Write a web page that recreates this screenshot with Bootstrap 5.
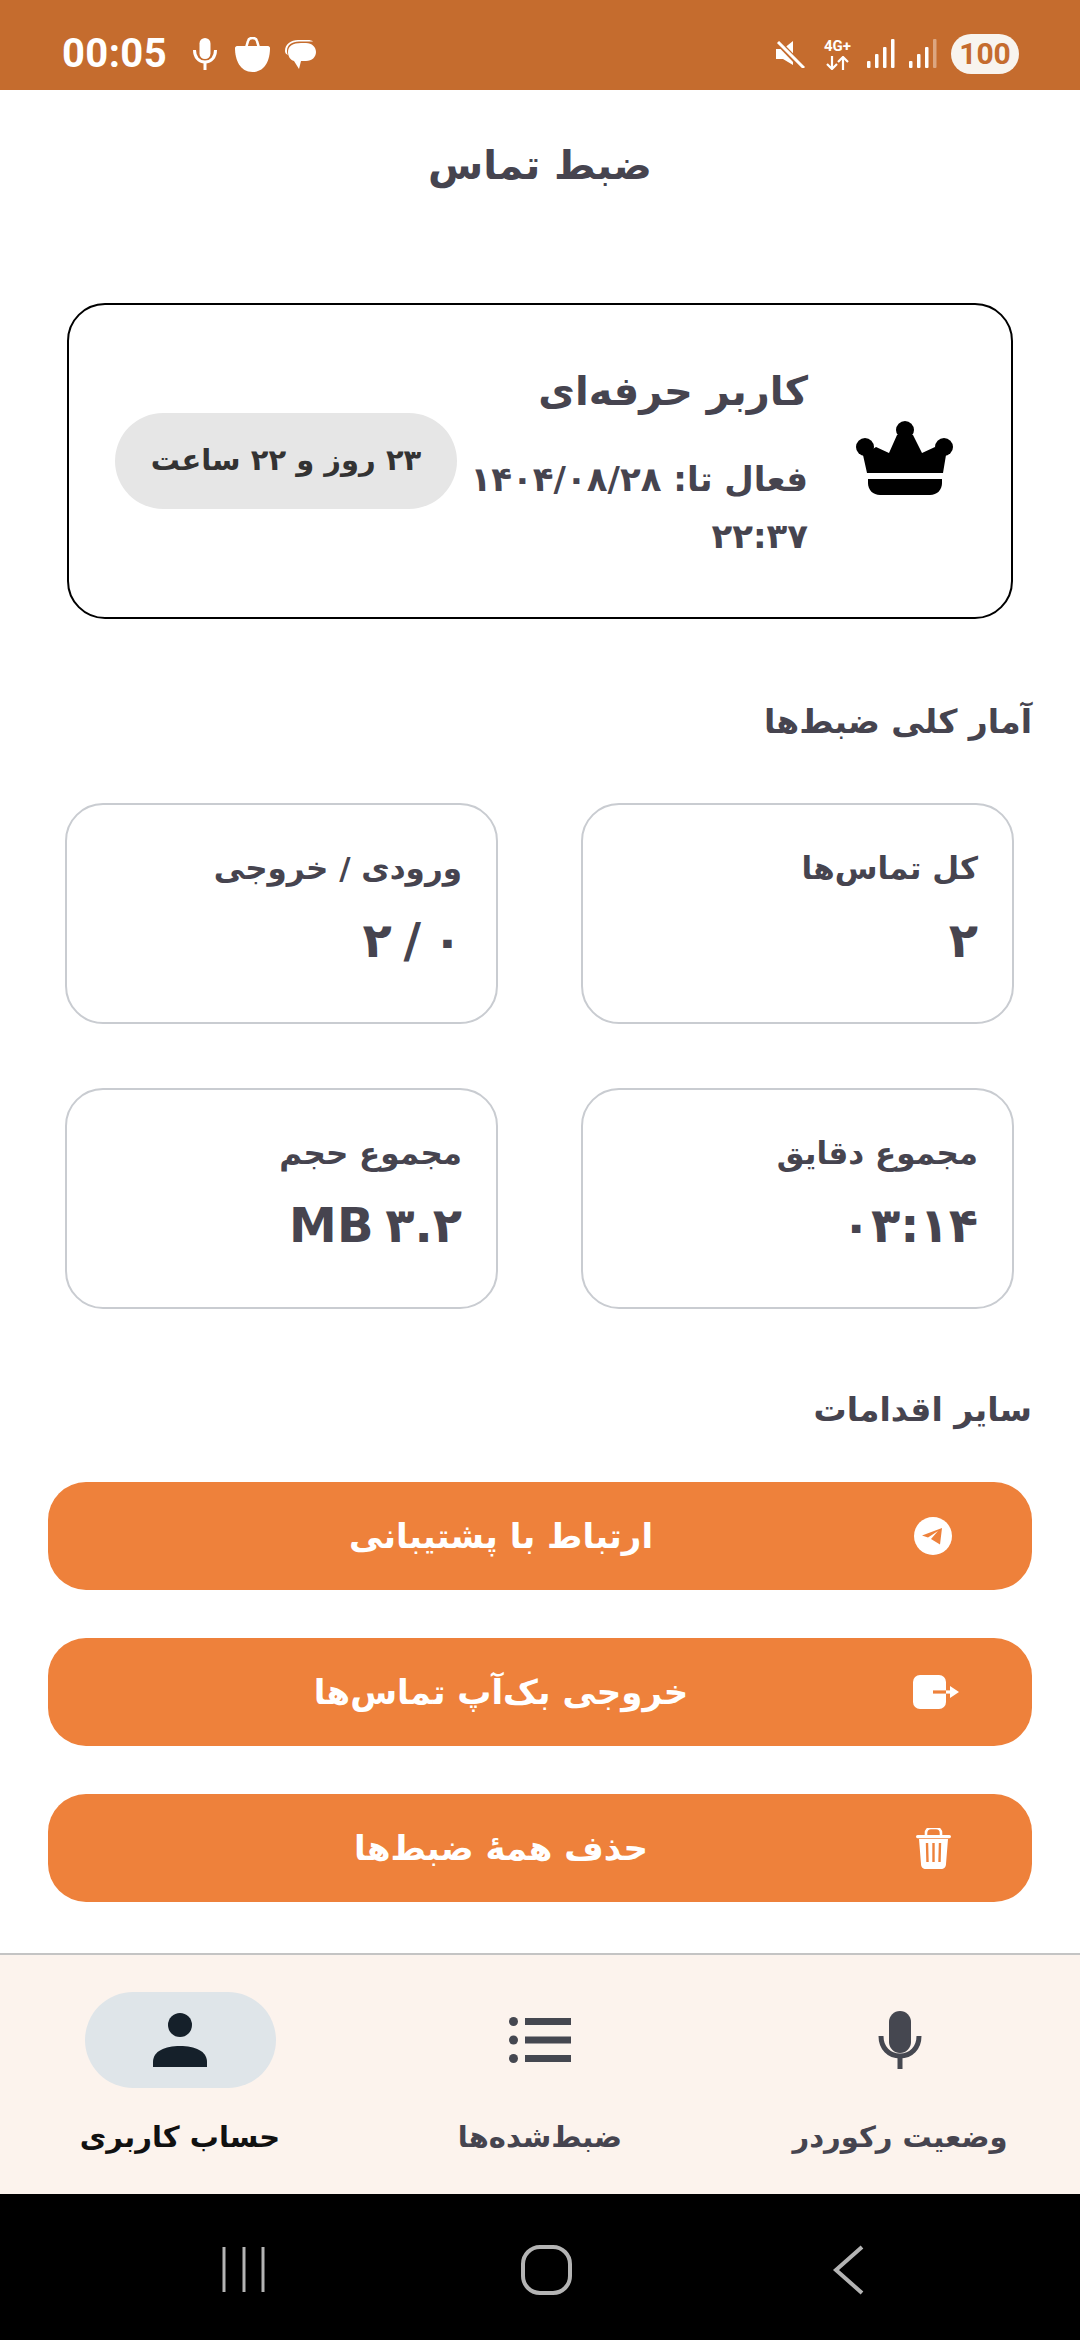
<!DOCTYPE html>
<html lang="fa" dir="rtl">
<head>
<meta charset="utf-8">
<link href="https://cdn.jsdelivr.net/npm/bootstrap@5.3.0/dist/css/bootstrap.min.css" rel="stylesheet">
<style>
html,body{margin:0;background:#fff}
body{font-family:"DejaVu Sans","Noto Sans",sans-serif;color:#46444f;width:1080px;height:2340px;overflow:hidden}
.app-screen{width:1080px;height:2340px}
.status-strip{height:90px;background:#c56c2e;padding:18px 61px 0 62px;color:#fff}
.clock-text{font:700 40px/1 Roboto,sans-serif;letter-spacing:.4px;width:105px;white-space:nowrap}
.left-icons{gap:18px}
.chat-ico{margin-left:-4px}
.net-wrap{width:33px;margin-left:16px;color:#fff}
.net-tag{font:700 15px/14px Roboto,sans-serif;white-space:nowrap;margin-bottom:3px;text-align:center}
.batt-pill{width:68px;height:40px;border-radius:20px;background:#f8f4ee;color:#c56c2e;font:700 30px/40px Roboto,sans-serif;text-align:center;margin-left:14px}
.screen-title{height:213px;padding-top:50px;font-size:40px;font-weight:700;line-height:50px}
.hero-box{margin:0 67px;height:316px;border:2px solid #000;border-radius:38px;padding:0 58px 0 46px}
.crown-ico{margin-top:-6px}
.hero-texts{width:351px;margin-right:48px}
.hero-name{font-size:40px;font-weight:700;line-height:60px;margin-bottom:30px;margin-top:4px}
.hero-date{font-size:34px;font-weight:700;line-height:57px}
.time-pill{background:#e6e6e6;color:#333;border-radius:48px;width:342px;height:96px;font-size:29px;font-weight:700}
.block-head{font-size:33px;font-weight:700;line-height:44px;padding-right:48px}
.head-stats{margin-top:81px;margin-bottom:59px}
.head-actions{margin-top:79px;margin-bottom:50px}
.stat-grid{display:grid;grid-template-columns:433px 433px;column-gap:83px;row-gap:64px;margin:0 66px}
.stat-box{height:221px;border:2px solid #c9ccd1;border-radius:38px;padding:41px 34px 0}
.stat-label{font-size:31px;font-weight:600;line-height:44px}
.stat-num{font-size:48px;font-weight:700;line-height:60px;margin-top:20px;word-spacing:-5px}
.action-stack{gap:48px}
.act-btn{height:108px;margin:0 48px;border-radius:38px;background:#ee813b;color:#fff;padding:0 80px;font-size:34px;font-weight:700;border:0;width:984px}
.act-btn:hover{background:#ee813b;color:#fff}
.act-ico{width:38px;height:44px;display:flex;justify-content:center;align-items:center;margin-left:40px}
.tab-strip{height:241px;background:#fcf3ed;border-top:2px solid #c4c4c4}
.tab-cell{width:360px;padding-top:37px}
.tab-ico{width:191px;height:96px;border-radius:48px}
.tab-ico.is-on{background:#dfe5e9}
.tab-name{font-size:29px;font-weight:600;line-height:40px;margin-top:29px}
.tab-name.is-on{color:#111;font-weight:700}
.sys-strip{height:146px;background:#000}
</style>
</head>
<body>
<div class="app-screen d-flex flex-column">
  <div class="status-strip d-flex align-items-center justify-content-between" dir="ltr">
    <div class="d-flex align-items-center left-icons">
      <span class="clock-text me-2">00:05</span>
      <svg width="24" height="32" viewBox="0 0 24 32" fill="none"><rect x="6.500" y="0" width="11" height="21" rx="5.500" fill="#fff"/><path d="M1.500 12c0 7 4 12 10.500 12s10.500-5 10.500-12" stroke="#fff" stroke-width="3"/><path d="M12 24v8" stroke="#fff" stroke-width="3"/></svg>
      <svg width="35" height="35" viewBox="0 0 35 35"><path d="M2 9h31c1 0 2 1 2 2 0 12-5 24-17.500 24S0 23 0 11c0-1 1-2 2-2z" fill="#fff"/><path d="M11 11l2-7c1-4 8-4 9 0l2 7" fill="none" stroke="#fff" stroke-width="2.600"/></svg>
      <svg class="chat-ico" width="32" height="30" viewBox="0 0 32 30"><path d="M4 13C4 7 9 4 17 4h5c6 0 10 4 10 9s-4 9-10 9h-5l-2 8-5-8c-4-1-6-5-6-9z" fill="#fff"/><path d="M1 12C1 5 7 1 14 1h10c2 0 4 .5 5 1.500H15C8 2.500 3 6 3 12c0 2 .5 3 1 4-2-1-3-2-3-4z" fill="#fff"/></svg>
    </div>
    <div class="d-flex align-items-center">
      <svg width="30" height="27" viewBox="0 0 30 27" fill="#fff"><path d="M1 8h7l10-8v24L8 18H1z"/><path d="M2 0l26 27" stroke="#c56c2e" stroke-width="6"/><path d="M3 1l26 26" stroke="#fff" stroke-width="3"/></svg>
      <div class="net-wrap d-flex flex-column align-items-center">
        <div class="net-tag">4G+</div>
        <svg width="24" height="14" viewBox="0 0 24 14"><path d="M6 0v13M1 8l5 5 5-5M17 14V1M12 6l5-5 5 5" fill="none" stroke="#fff" stroke-width="2.200"/></svg>
      </div>
      <svg class="sig-ico" style="margin-left:13px" width="28" height="30" viewBox="0 0 28 30" fill="#fff"><rect x="0" y="22" width="3.500" height="7" rx="1"/><rect x="8" y="15" width="3.500" height="14" rx="1"/><rect x="16" y="8" width="3.500" height="21" rx="1"/><rect x="24" y="0" width="3.500" height="29" rx="1"/></svg>
      <svg class="sig-ico" style="margin-left:14px" width="28" height="30" viewBox="0 0 28 30" fill="#fff"><rect x="0" y="22" width="3.500" height="7" rx="1"/><rect x="8" y="15" width="3.500" height="14" rx="1"/><rect x="16" y="8" width="3.500" height="21" rx="1"/><rect x="24" y="0" width="3.500" height="29" rx="1" opacity=".4"/></svg>
      <div class="batt-pill">100</div>
    </div>
  </div>

  <div class="screen-title text-center">ضبط تماس</div>

  <div class="hero-box d-flex align-items-center">
    <svg class="crown-ico flex-shrink-0" width="97" height="74" viewBox="0 0 97 74" fill="#000"><circle cx="49" cy="9" r="9"/><circle cx="9" cy="26" r="9"/><circle cx="88" cy="26" r="9"/><path d="M41 14h16l9 18 13-6 11 8-3 18H11L7 34l13-8 13 6z"/><path d="M12 58h74v4c0 7-5 12-12 12H24c-7 0-12-5-12-12z"/></svg>
    <div class="hero-texts flex-shrink-0">
      <div class="hero-name">کاربر حرفه‌ای</div>
      <div class="hero-date">فعال تا: ۱۴۰۴/۰۸/۲۸ ۲۲:۳۷</div>
    </div>
    <div class="time-pill d-flex align-items-center justify-content-center flex-shrink-0">۲۳ روز و ۲۲ ساعت</div>
  </div>

  <div class="block-head head-stats">آمار کلی ضبط‌ها</div>

  <div class="stat-grid">
    <div class="stat-box"><div class="stat-label">کل تماس‌ها</div><div class="stat-num">۲</div></div>
    <div class="stat-box"><div class="stat-label">ورودی / خروجی</div><div class="stat-num">۰ / ۲</div></div>
    <div class="stat-box"><div class="stat-label">مجموع دقایق</div><div class="stat-num">۰۳:۱۴</div></div>
    <div class="stat-box"><div class="stat-label">مجموع حجم</div><div class="stat-num">MB ۳.۲</div></div>
  </div>

  <div class="block-head head-actions">سایر اقدامات</div>

  <div class="d-flex flex-column action-stack">
    <button class="btn act-btn d-flex align-items-center">
      <span class="act-ico"><svg width="38" height="38" viewBox="0 0 38 38"><circle cx="19" cy="19" r="19" fill="#fff"/><path d="M28 11L8 18.500l6 2 10-6.500-7 8 9 5.500z" fill="#ee813b"/></svg></span>
      <span class="flex-grow-1 text-center">ارتباط با پشتیبانی</span>
    </button>
    <button class="btn act-btn d-flex align-items-center">
      <span class="act-ico"><svg width="46" height="34" viewBox="0 0 46 34" style="margin-right:-7px;margin-left:-1px"><rect x="0" y="0" width="33" height="34" rx="7" fill="#fff"/><path d="M20 17h13" stroke="#ee813b" stroke-width="3.200"/><path d="M33 17h6" stroke="#fff" stroke-width="3.200"/><path d="M37 11l9 6-9 6z" fill="#fff"/></svg></span>
      <span class="flex-grow-1 text-center">خروجی بک‌آپ تماس‌ها</span>
    </button>
    <button class="btn act-btn d-flex align-items-center">
      <span class="act-ico"><svg width="35" height="41" viewBox="0 0 35 41"><path d="M10 7V5c0-3 2-5 5-5h5c3 0 5 2 5 5v2" fill="none" stroke="#fff" stroke-width="2.600"/><rect x="0" y="7" width="35" height="3.200" rx="1.600" fill="#fff"/><path d="M3 11h29l-2 25c0 3-2 5-5 5H10c-3 0-5-2-5-5z" fill="#fff"/><path d="M11 15l.5 19M17.500 15v19M24 15l-.5 19" stroke="#ee813b" stroke-width="2.400"/></svg></span>
      <span class="flex-grow-1 text-center">حذف همهٔ ضبط‌ها</span>
    </button>
  </div>

  <div class="tab-strip d-flex mt-auto">
    <div class="tab-cell d-flex flex-column align-items-center">
      <div class="tab-ico d-flex align-items-center justify-content-center"><svg width="44" height="58" viewBox="0 0 44 58"><rect x="11" y="0" width="22" height="42" rx="11" fill="#454750"/><path d="M3 25c0 12 8 20 19 20s19-8 19-20" fill="none" stroke="#454750" stroke-width="5"/><path d="M22 44v14" stroke="#454750" stroke-width="5"/></svg></div>
      <div class="tab-name">وضعیت رکوردر</div>
    </div>
    <div class="tab-cell d-flex flex-column align-items-center">
      <div class="tab-ico d-flex align-items-center justify-content-center"><svg width="62" height="46" viewBox="0 0 62 46" fill="#454750"><circle cx="4.500" cy="4.500" r="4.500"/><circle cx="4.500" cy="23" r="4.500"/><circle cx="4.500" cy="41.500" r="4.500"/><rect x="16" y="1" width="46" height="7"/><rect x="16" y="19.500" width="46" height="7"/><rect x="16" y="38" width="46" height="7"/></svg></div>
      <div class="tab-name">ضبط‌شده‌ها</div>
    </div>
    <div class="tab-cell d-flex flex-column align-items-center">
      <div class="tab-ico is-on d-flex align-items-center justify-content-center"><svg width="54" height="54" viewBox="0 0 54 54" fill="#15202a"><circle cx="27" cy="12" r="12"/><path d="M0 54V49C0 38 12 33 27 33s27 5 27 16v5z"/></svg></div>
      <div class="tab-name is-on">حساب کاربری</div>
    </div>
  </div>

  <div class="sys-strip d-flex align-items-center" dir="ltr">
    <svg width="1080" height="146" viewBox="0 0 1080 146" fill="none" stroke="#b4b4b4"><path d="M224 53v45M244 53v45M263 53v45" stroke-width="3"/><rect x="523" y="53" width="47" height="46" rx="17" stroke-width="4"/><path d="M862 53l-26 23 26 23" stroke-width="4"/></svg>
  </div>
</div>
<script src="https://cdn.jsdelivr.net/npm/bootstrap@5.3.0/dist/js/bootstrap.bundle.min.js"></script>
</body>
</html>
